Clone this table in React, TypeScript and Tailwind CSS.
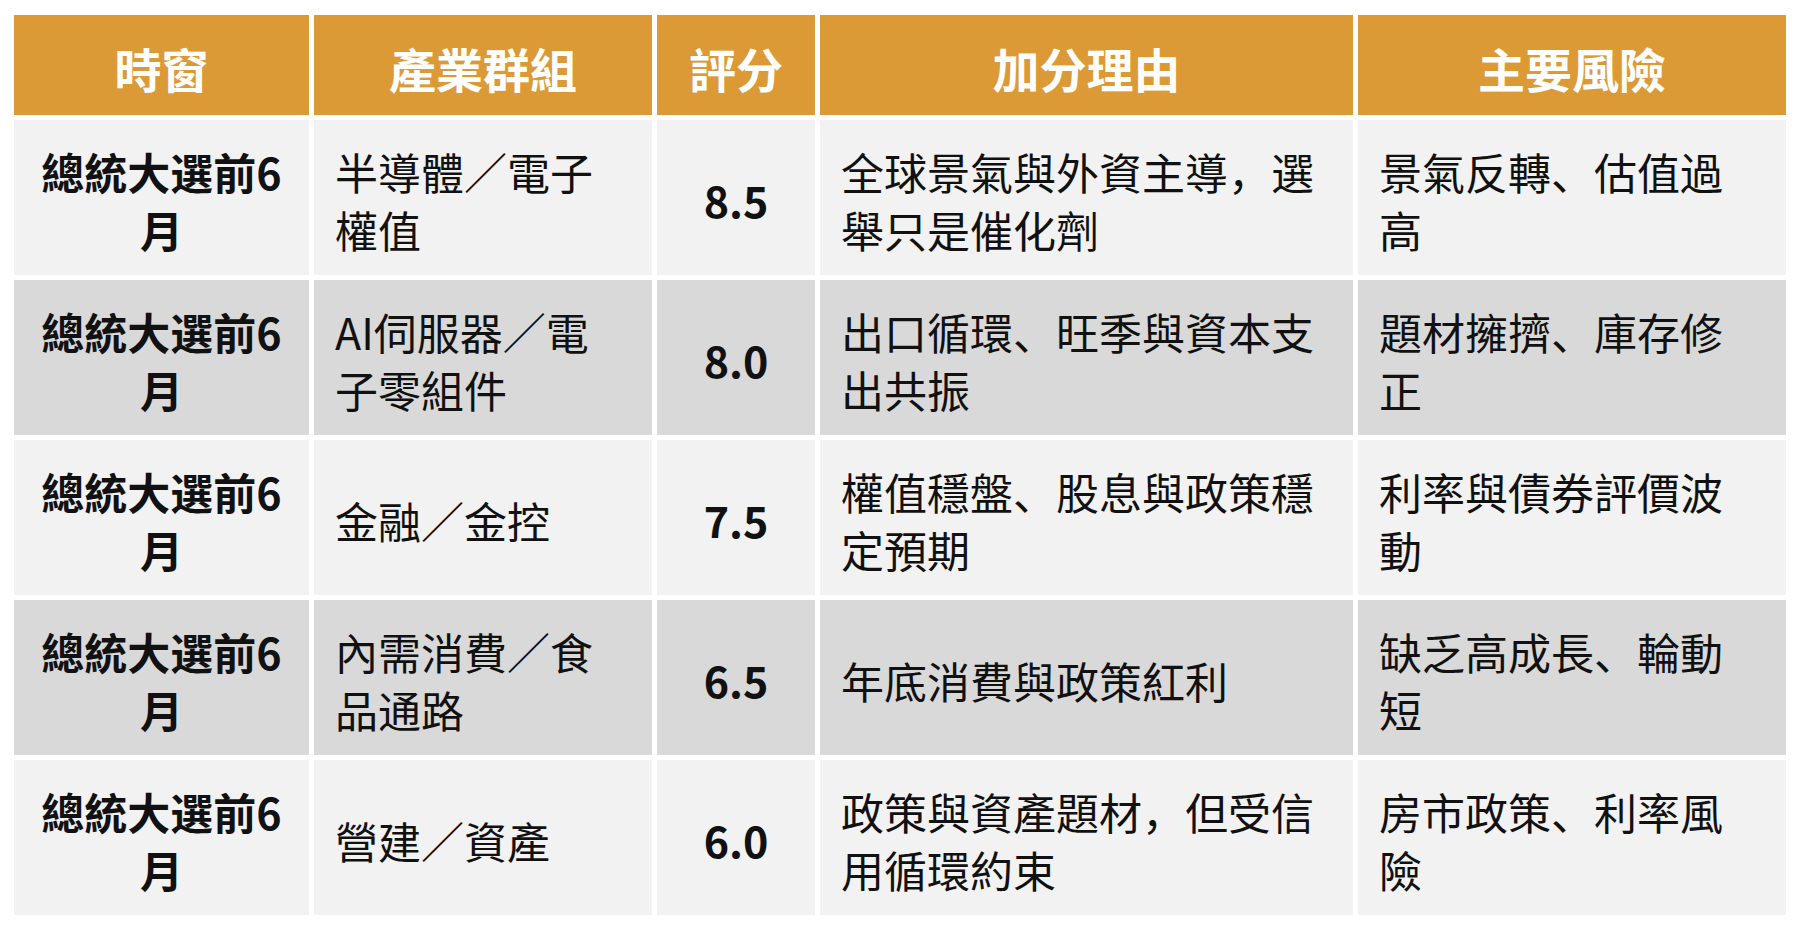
import React from "react";

type Row = {
  window: string;
  group: string;
  score: string;
  reason: string;
  risk: string;
};

const ROWS: Row[] = [
  {
    window: "總統大選前6月",
    group: "半導體／電子權值",
    score: "8.5",
    reason: "全球景氣與外資主導，選舉只是催化劑",
    risk: "景氣反轉、估值過高",
  },
  {
    window: "總統大選前6月",
    group: "AI伺服器／電子零組件",
    score: "8.0",
    reason: "出口循環、旺季與資本支出共振",
    risk: "題材擁擠、庫存修正",
  },
  {
    window: "總統大選前6月",
    group: "金融／金控",
    score: "7.5",
    reason: "權值穩盤、股息與政策穩定預期",
    risk: "利率與債券評價波動",
  },
  {
    window: "總統大選前6月",
    group: "內需消費／食品通路",
    score: "6.5",
    reason: "年底消費與政策紅利",
    risk: "缺乏高成長、輪動短",
  },
  {
    window: "總統大選前6月",
    group: "營建／資產",
    score: "6.0",
    reason: "政策與資產題材，但受信用循環約束",
    risk: "房市政策、利率風險",
  },
];

const HEADERS = ["時窗", "產業群組", "評分", "加分理由", "主要風險"];

export default function App() {
  return (
    <div
      className="w-[1800px] h-[929px] bg-white px-[14px] pt-[15px]"
      style={{ fontFamily: '"Noto Sans CJK SC", "Noto Sans", sans-serif' }}
    >
      <div className="grid grid-cols-[295px_338px_158px_533px_428px] gap-[5px] text-[#111111]">
        {/* Header */}
        {HEADERS.map((h) => (
          <div
            key={h}
            className="h-[100px] bg-[#dc9a36] flex items-center justify-center pt-[7px] text-white text-[47px] font-bold"
          >
            {h}
          </div>
        ))}

        {/* Body rows */}
        {ROWS.map((row, i) => {
          const bg = i % 2 === 0 ? "bg-[#f2f2f2]" : "bg-[#d9d9d9]";
          return (
            <React.Fragment key={i}>
              <div
                className={`${bg} h-[155px] flex items-center justify-center px-6 pt-1 text-center text-[43px] leading-[58px] font-bold`}
              >
                {row.window}
              </div>
              <div
                className={`${bg} h-[155px] flex items-center pl-[21px] pr-6 pt-1 text-[43px] leading-[58px]`}
              >
                {row.group}
              </div>
              <div
                className={`${bg} h-[155px] flex items-center justify-center pt-1 text-[43px] font-bold`}
              >
                {row.score}
              </div>
              <div
                className={`${bg} h-[155px] flex items-center pl-[21px] pr-6 pt-1 text-[43px] leading-[58px]`}
              >
                {row.reason}
              </div>
              <div
                className={`${bg} h-[155px] flex items-center pl-[21px] pr-6 pt-1 text-[43px] leading-[58px]`}
              >
                {row.risk}
              </div>
            </React.Fragment>
          );
        })}
      </div>
    </div>
  );
}
